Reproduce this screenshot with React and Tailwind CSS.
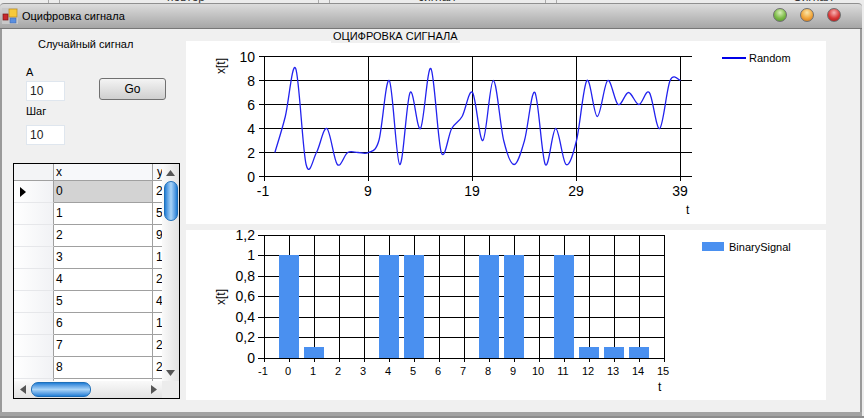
import React from "react";

const FONT = { fontFamily: '"Liberation Sans", Arial, sans-serif' };

const curveData = [2,5,9,1,2,4,1,2,2,2,3,8,1,7,4,9,2,4,5,7,3,8,3,1,3,7,1,4,1,3,8,5,8,6,7,6,7,4,8,8];

function splinePath(pts, tension = 0.5) {
  const k = tension / 3;
  let d = `M${pts[0][0]} ${pts[0][1]}`;
  for (let i = 0; i < pts.length - 1; i++) {
    const p0 = pts[Math.max(0, i - 1)];
    const p1 = pts[i];
    const p2 = pts[i + 1];
    const p3 = pts[Math.min(pts.length - 1, i + 2)];
    const c1 = [p1[0] + (p2[0] - p0[0]) * k, p1[1] + (p2[1] - p0[1]) * k];
    const c2 = [p2[0] - (p3[0] - p1[0]) * k, p2[1] - (p3[1] - p1[1]) * k];
    d += ` C${c1[0].toFixed(2)} ${c1[1].toFixed(2)} ${c2[0].toFixed(2)} ${c2[1].toFixed(2)} ${p2[0].toFixed(2)} ${p2[1].toFixed(2)}`;
  }
  return d;
}

function SignalChart() {
  const ox = 186, oy = 41;
  const X = (t) => 264 - ox + (t + 1) * 10.4;
  const Y = (v) => 176 - oy + 0.5 - v * 12;
  const pts = curveData.map((v, i) => [X(i) + 0.5, Y(v)]);
  const xs = [-1, 9, 19, 29, 39];
  const ys = [0, 2, 4, 6, 8, 10];
  return (
    <svg width="640" height="183" className="block" style={FONT}>
      <g stroke="#000" strokeWidth="1" shapeRendering="crispEdges">
        {ys.map((v) => (
          <line key={v} x1={259 - ox} x2={692 - ox} y1={Y(v)} y2={Y(v)} />
        ))}
        {xs.map((t) => (
          <line key={t} x1={X(t) + 0.5} x2={X(t) + 0.5} y1={Y(10)} y2={Y(0) + 4} />
        ))}
      </g>
      <path d={splinePath(pts)} fill="none" stroke="#2222ee" strokeWidth="1.3" />
      <g fontSize="14" fill="#000" textAnchor="end">
        {ys.map((v) => (
          <text key={v} x={255 - ox} y={Y(v) + 5}>{v}</text>
        ))}
      </g>
      <g fontSize="14" fill="#000" textAnchor="middle">
        {xs.map((t) => (
          <text key={t} x={X(t) - (t === -1 ? 1 : 0)} y={196 - oy}>{t}</text>
        ))}
      </g>
      <text x={686 - ox} y={214 - oy} fontSize="12" fill="#000">t</text>
      <text transform={`translate(${225 - ox} ${66 - oy}) rotate(-90)`} fontSize="12" fill="#000" textAnchor="middle">x[t]</text>
      <line x1={722 - ox} x2={746 - ox} y1={58 - oy} y2={58 - oy} stroke="#0000e8" strokeWidth="2" />
      <text x={749 - ox} y={62 - oy} fontSize="11" fill="#000">Random</text>
    </svg>
  );
}

const bars = [[0,1],[1,.1],[4,1],[5,1],[8,1],[9,1],[11,1],[12,.1],[13,.1],[14,.1]];

function BinaryChart() {
  const ox = 186, oy = 230;
  const X = (t) => 264 - ox + (t + 1) * 25;
  const ylines = [[358,"0"],[337,"0,2"],[317,"0,4"],[296,"0,6"],[276,"0,8"],[255,"1"],[235,"1,2"]];
  const ticks = Array.from({ length: 17 }, (_, i) => i - 1);
  return (
    <svg width="640" height="170" className="block" style={FONT}>
      <g stroke="#000" strokeWidth="1" shapeRendering="crispEdges">
        {ylines.map(([y]) => (
          <line key={y} x1={258 - ox} x2={664 - ox} y1={y - oy + 0.5} y2={y - oy + 0.5} />
        ))}
        {ticks.map((t) => (
          <line key={t} x1={X(t) + 0.5} x2={X(t) + 0.5} y1={235 - oy} y2={362 - oy} />
        ))}
      </g>
      {bars.map(([t, v]) => {
        const top = v === 1 ? 255 : 347;
        return <rect key={t} x={X(t) - 10} y={top - oy} width="20" height={358 - top} fill="#4a90f0" />;
      })}
      <g fontSize="14" fill="#000" textAnchor="end">
        {ylines.map(([y, l]) => (
          <text key={y} x={255 - ox} y={y - oy + 5}>{l}</text>
        ))}
      </g>
      <g fontSize="11" fill="#000" textAnchor="middle">
        {ticks.map((t) => (
          <text key={t} x={X(t) - 1} y={375 - oy}>{t}</text>
        ))}
      </g>
      <text x={658 - ox} y={391 - oy} fontSize="12" fill="#000">t</text>
      <text transform={`translate(${225 - ox} ${297 - oy}) rotate(-90)`} fontSize="12" fill="#000" textAnchor="middle">x[t]</text>
      <rect x={702 - ox} y={242 - oy} width="22" height="9" fill="#4a90f0" />
      <text x={729 - ox} y={251 - oy} fontSize="11" fill="#000">BinarySignal</text>
    </svg>
  );
}

function Orb({ className }) {
  return <div className={`h-[14px] w-[14px] rounded-full border border-[#6f6f6f] ${className}`} />;
}

function AppIcon() {
  return (
    <svg width="16" height="16" viewBox="0 0 16 16" className="block">
      <rect x="0" y="0" width="16" height="16" fill="#c8c8c8" />
      <rect x="7" y="1" width="8" height="8" fill="#f6c93c" stroke="#b98a20" strokeWidth="0.7" />
      <rect x="1" y="6" width="5" height="6" fill="#c8282c" stroke="#7a1515" strokeWidth="0.7" />
      <rect x="8" y="10" width="6" height="5" fill="#5a8fe0" stroke="#3a62a8" strokeWidth="0.5" />
    </svg>
  );
}

const rows = [["0","2"],["1","5"],["2","9"],["3","1"],["4","2"],["5","4"],["6","1"],["7","2"],["8","2"],["",""]];

function DataGrid() {
  return (
    <div className="flex h-[236px] w-[167px] flex-col border border-black bg-[#ececec] text-[12px] text-black">
      <div className="flex h-[217px] min-h-0">
        <div className="w-[148px] overflow-hidden bg-white">
          <div className="flex h-[17px] border-b border-[#a0a0a0] bg-[#f7f8fa]">
            <div className="w-[40px] shrink-0 border-r border-[#a0a0a0] bg-[#f3f4f6]" />
            <div className="w-[99px] shrink-0 border-r border-[#a0a0a0] pl-[2px] leading-[17px]">x</div>
            <div className="pl-[4px] leading-[17px]">y</div>
          </div>
          {rows.map(([x, y], i) => (
            <div key={i} className="flex h-[22px]">
              <div className="flex w-[40px] shrink-0 items-center border-r border-b border-r-[#a0a0a0] border-b-[#e6e7ea] bg-gradient-to-r from-white to-[#f1f2f5] pl-[6px]">
                {i === 0 && (
                  <svg width="6" height="10" viewBox="0 0 6 10"><path d="M0 0L6 5L0 10Z" fill="#000" /></svg>
                )}
              </div>
              <div className={`w-[99px] shrink-0 border-r border-b border-[#a0a0a0] pl-[2px] leading-[21px] ${i === 0 ? "bg-[#d3d3d3]" : ""}`}>{x}</div>
              <div className="flex-1 border-b border-[#a0a0a0] pl-[3px] leading-[21px]">{y}</div>
            </div>
          ))}
        </div>
        <div className="flex w-[17px] flex-col items-center bg-gradient-to-r from-[#fafafa] to-[#e2e2e2]">
          <div className="flex h-[17px] shrink-0 items-center">
            <svg width="9" height="6" viewBox="0 0 9 6"><path d="M0 6L4.5 0L9 6Z" fill="#555" /></svg>
          </div>
          <div className="h-[40px] w-[14px] shrink-0 rounded-[7px] border border-[#1f6fb8] bg-gradient-to-r from-[#1e7fd6] via-[#a9d4f7] to-[#1e7fd6]" />
          <div className="flex-1" />
          <div className="flex h-[17px] shrink-0 items-center">
            <svg width="9" height="6" viewBox="0 0 9 6"><path d="M0 0L4.5 6L9 0Z" fill="#555" /></svg>
          </div>
        </div>
      </div>
      <div className="flex h-[17px] items-center bg-gradient-to-b from-[#fafafa] to-[#e2e2e2]">
        <div className="flex w-[17px] justify-center">
          <svg width="6" height="9" viewBox="0 0 6 9"><path d="M6 0L0 4.5L6 9Z" fill="#555" /></svg>
        </div>
        <div className="h-[15px] w-[60px] rounded-[7px] border border-[#1f6fb8] bg-gradient-to-b from-[#1e7fd6] via-[#a9d4f7] to-[#1e7fd6]" />
        <div className="flex-1" />
        <div className="flex w-[17px] justify-center">
          <svg width="6" height="9" viewBox="0 0 6 9"><path d="M0 0L6 4.5L0 9Z" fill="#555" /></svg>
        </div>
        <div className="h-full w-[17px] bg-[#ececec]" />
      </div>
    </div>
  );
}

function NumberBox() {
  return (
    <div className="h-[20px] w-[39px] border border-[#dfe6ee] bg-white pl-[3px] text-[12px] leading-[19px] text-[#222]">10</div>
  );
}

export default function App() {
  return (
    <div className="flex h-[418px] w-[864px] flex-col overflow-hidden bg-[#ececec]" style={FONT}>
      <div className="h-[3px] overflow-hidden text-[12px] leading-[12px] text-[#333]">
        <div className="flex h-[3px] items-end">
          <span className="ml-[48px] h-[3px] w-[12px] border-x border-[#aaa]" />
          <span className="h-[12px] w-[107px]" />
          <span className="h-[12px] w-[151px] -translate-y-[0px] overflow-hidden">
            <span className="block">повтор</span>
          </span>
          <span className="h-[3px] w-[12px] border-x border-[#aaa]" />
          <span className="h-[12px] w-[215px] overflow-hidden pl-[88px]">сигнал</span>
          <span className="h-[3px] w-[12px] border-x border-[#aaa]" />
          <span className="h-[12px] w-[236px]" />
          <span className="h-[12px]">Сигнал</span>
        </div>
      </div>
      <div className="mr-[2px] flex h-[26px] items-center rounded-t-[4px] border-t border-b border-t-[#8f8f8f] border-b-[#777] bg-gradient-to-b from-[#dcdcdc] to-[#a6a6a6] pl-[2px] pr-[21px]">
        <AppIcon />
        <span className="ml-[4px] text-[11px] text-black">Оцифровка сигнала</span>
        <div className="mb-[2px] ml-auto flex gap-[13px]">
          <Orb className="bg-[radial-gradient(circle_at_50%_30%,#d8efb8,#7cbb46_55%,#4f8f2a_100%)]" />
          <Orb className="bg-[radial-gradient(circle_at_50%_30%,#fbe6a8,#f2a63a_55%,#c9701c_100%)]" />
          <Orb className="bg-[radial-gradient(circle_at_50%_30%,#f6b4b4,#d93636_55%,#a01818_100%)]" />
        </div>
      </div>
      <div className="mr-[2px] flex h-[383px] border-x-[2px] border-x-[#9a9a9a] bg-[#f0f0f0]">
        <div className="flex w-[184px] shrink-0 flex-col text-[11px] text-black">
          <div className="mt-[8px] pl-[36px] leading-[14px]">Случайный сигнал</div>
          <div className="mt-[14px] flex">
            <div className="pl-[24px]">
              <div className="leading-[14px]">A</div>
              <div className="mt-[2px]"><NumberBox /></div>
              <div className="mt-[3px] leading-[14px]">Шаг</div>
              <div className="mt-[7px]"><NumberBox /></div>
            </div>
            <button className="ml-[34px] mt-[13px] h-[22px] w-[67px] rounded-[3px] border border-[#707070] bg-gradient-to-b from-[#f4f4f4] to-[#cfcfcf] text-[12px] text-black">Go</button>
          </div>
          <div className="ml-[11px] mt-[18px]"><DataGrid /></div>
        </div>
        <div className="relative flex w-[640px] shrink-0 flex-col gap-[6px] pt-[12px]">
          <div className="absolute left-[145px] top-0 h-[14px] bg-[#f0f0f0] px-[2px] text-[11px] leading-[15px] text-black">ОЦИФРОВКА СИГНАЛА</div>
          <div className="h-[183px] bg-white"><SignalChart /></div>
          <div className="h-[170px] bg-white"><BinaryChart /></div>
        </div>
      </div>
      <div className="mr-[2px] h-[4px] bg-[#a2a2a2]" />
      <div className="h-[2px] overflow-hidden bg-[#8c8c8c] pl-[368px] text-[12px] font-bold leading-[12px] text-[#333]">сохранение</div>
    </div>
  );
}
